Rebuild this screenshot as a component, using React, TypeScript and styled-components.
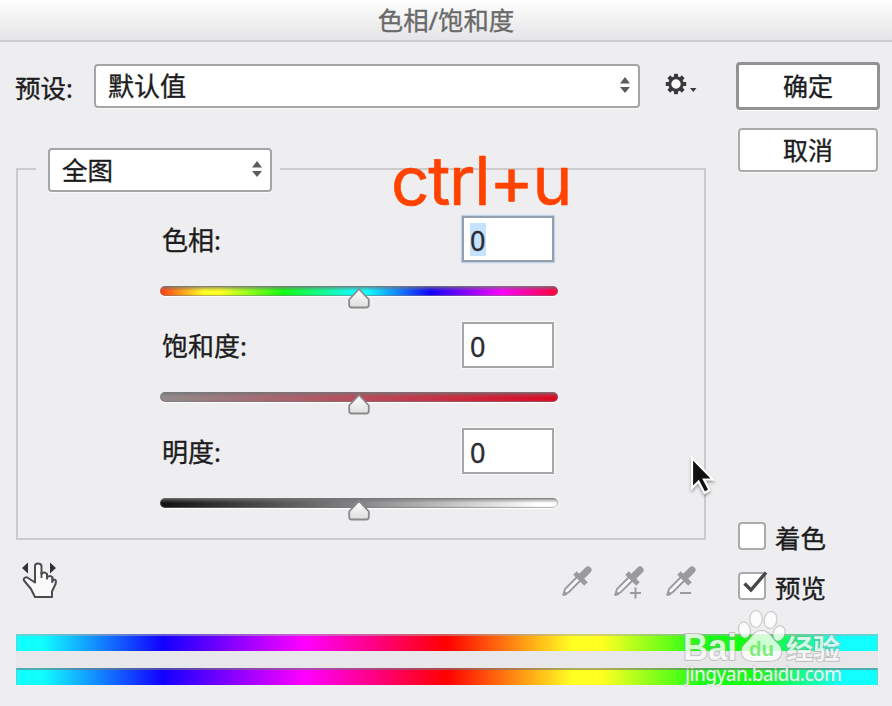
import React from "react";
import styled, { createGlobalStyle } from "styled-components";

const Global = createGlobalStyle`
  * { box-sizing: border-box; }
  body { margin: 0; background: #eeeef0; }
`;

const Dialog = styled.div`
  position: relative;
  width: 892px;
  height: 706px;
  overflow: hidden;
  background: #eeeef0;
  color: #1c1c1e;
  font: 26px/32px "Noto Sans", "Noto Sans CJK SC", sans-serif;
  -webkit-text-stroke: 0.35px currentColor;
  display: flex;
  flex-direction: column;
`;

const TitleBar = styled.header`
  flex: none;
  height: 42px;
  padding-top: 4px;
  border-bottom: 2px solid #cbcbcc;
  background: linear-gradient(#fefefe, #f6f5f6 35%, #e5e4e6);
  color: #6a6a6b;
  text-align: center;
  font-size: 25.4px;
`;

const Content = styled.div`
  flex: none;
  height: 592px;
  display: flex;
  padding: 0 12px 0 16px;
  justify-content: space-between;
`;

const Main = styled.main`
  width: 690px;
  display: flex;
  flex-direction: column;
`;

const PresetRow = styled.div`
  display: flex;
  height: 44px;
  margin: 22px 0 38px;
`;

const PresetLabel = styled.label`
  width: 78px;
  margin-left: -1px;
  margin-right: 1px;
  padding-top: 8px;
  font-size: 25.5px;
`;

const SelectBox = styled.div<{ $width: number }>`
  width: ${(p) => p.$width}px;
  height: 44px;
  display: flex;
  align-items: center;
  justify-content: space-between;
  padding: 0 7px 0 12px;
  border: 2px solid #a5a5a7;
  border-radius: 4px;
  background: #fff;
  box-shadow: 0 1px 1px #fafafa;
`;

const GearButton = styled.div`
  margin: 8px 0 0 25px;
  display: flex;
`;

const Group = styled.fieldset`
  height: 394px;
  min-width: 0;
  margin: 0;
  padding: 0 0 0 142px;
  border: 2px solid #cbcbcd;
`;

const Legend = styled.legend`
  width: 244px;
  height: 46px;
  padding: 2px 8px 0 12px;
  margin-left: -124px;
  font-size: 25.5px;
`;

const SliderRow = styled.div`
  width: 398px;
  height: 106px;
`;

const Sliders = styled.div`
  padding-top: 24px;
`;

const SliderHead = styled.div`
  display: flex;
  height: 46px;
  justify-content: space-between;
  padding: 0 4px 0 2px;
`;

const SliderName = styled.span`
  padding-top: 8px;
`;

const NumberField = styled.div<{ $focused?: boolean }>`
  width: 92px;
  height: 46px;
  padding: 5px 0 0 6px;
  border: 2px solid ${(p) => (p.$focused ? "#94a0ae" : "#a6a6a8")};
  background: #fff;
  box-shadow: 0 0 1px 1px ${(p) => (p.$focused ? "#bfd3e8" : "#f6f6f6")};
  font-size: 27px;
`;

const Digit = styled.span<{ $selected?: boolean }>`
  display: block;
  width: 16px;
  height: 33px;
  line-height: 35px;
  color: #2c2c30;
  background: ${(p) => (p.$selected ? "#c5e3ff" : "transparent")};
`;

const Track = styled.div<{ $fill: string }>`
  height: 10px;
  margin-top: 24px;
  border-radius: 5px;
  background: linear-gradient(#747476d0, #77777900 50%), ${(p) => p.$fill};
  box-shadow: inset 0 0 1px 1px #77777999, 0 1px 1px #fff;
`;

const Thumb = styled.svg`
  display: block;
  margin: 0 auto;
  transform: translateY(2px);
`;

const ToolRow = styled.div`
  display: flex;
  justify-content: space-between;
  padding: 21px 7px 0 4px;
`;

const Droppers = styled.div`
  display: flex;
  gap: 16px;
  padding-top: 3px;
`;

const Side = styled.aside`
  width: 144px;
  padding-top: 20px;
  display: flex;
  flex-direction: column;
`;

const Button = styled.button<{ $primary?: boolean }>`
  width: ${(p) => (p.$primary ? 144 : 140)}px;
  height: ${(p) => (p.$primary ? 48 : 44)}px;
  margin: ${(p) => (p.$primary ? "0 0 18px" : "0 0 350px 2px")};
  padding: 0;
  border: ${(p) => (p.$primary ? "3px solid #929294" : "2px solid #ababad")};
  border-radius: 4px;
  background: #fff;
  box-shadow: 0 1px 1px #fafafa;
  color: inherit;
  font: inherit;
  font-size: 25px;
`;

const CheckRow = styled.label`
  display: flex;
  align-items: center;
  height: 28px;
  margin: 0 0 22px 2px;
  gap: 9px;
  font-size: 25.5px;
  white-space: nowrap;
`;

const CheckText = styled.span`
  padding-top: 3px;
`;

const CheckBox = styled.span`
  width: 28px;
  height: 28px;
  border: 2px solid #ababad;
  border-radius: 4px;
  background: #fff;
  svg { display: block; margin: -2px; overflow: visible; }
`;

const Strips = styled.footer`
  width: 862px;
  margin-left: 16px;
  background: #e8e7e9;
`;

const Spectrum = styled.div`
  height: 17px;
  margin-bottom: 17px;
  border: solid #aaaaac88;
  border-width: 2px 1px 0;
  background: linear-gradient(90deg, #1ff 0, #1ff 3%, #1200ff 17%, #f0f 33.5%, #f00 50%, #ff2 64.5%, #ff2 68%, #1f1 80%, #1f1 86%, #1ff 96%);
  background-origin: border-box;
  &:last-child { margin-bottom: 0; border-top-color: #77777999; }
`;

const Caption = styled.div`
  position: absolute;
  left: 391px;
  top: 141px;
  color: #ff4200;
  font: 67.5px/80px Inter, sans-serif;
  letter-spacing: -1.3px;
  -webkit-text-stroke: 0.6px #ff4200;
  white-space: nowrap;
`;

const Pointer = styled.svg`
  position: absolute;
  left: 685px;
  top: 453px;
  filter: drop-shadow(0 2px 1.5px #0005);
`;

const Watermark = styled.svg`
  position: absolute;
  left: 680px;
  top: 604px;
  -webkit-text-stroke: 0;
`;

const Arrows = () => (
  <svg width="12" height="18" viewBox="0 0 12 18" fill="#5c5c5e">
    <path d="M6 0L11 6.5H1zM1 10H11L6 16z" />
  </svg>
);

const Gear = () => (
  <svg width="36" height="24" viewBox="0 0 36 24">
    <g transform="translate(11 12)" stroke="#3a3a3c">
      <circle r="6.2" fill="#fafafa" strokeWidth="3" />
      {[0, 45, 90, 135, 180, 225, 270, 315].map((a) => (
        <path key={a} d="M0-6V-10.2" strokeWidth="4" transform={`rotate(${a})`} />
      ))}
    </g>
    <path d="M25 16h6.5l-3.2 4z" fill="#3a3a3c" />
  </svg>
);

const Dropper = ({ sign }: { sign?: string }) => (
  <svg width="36" height="36" viewBox="0 0 36 36" fill="none" stroke="#9b9b9d">
    <path d="M18 13L6 25L4.5 30L9.5 28.5L22 16" fill="#f7f7f8" strokeWidth="1.8" />
    <path d="M4 31.5l1-4 3 3z" fill="#9b9b9d" />
    <path d="M16 9l11 11M20 14l4-4" strokeWidth="5" />
    <path d="M23 12l6-6" strokeWidth="7" strokeLinecap="round" />
    {sign && <path d={sign} strokeWidth="2" />}
  </svg>
);

const Hand = () => (
  <svg width="38" height="38" viewBox="0 0 38 38">
    <path d="M2 7l6-5.5v11zM36 7l-6-5.5v11z" fill="#333335" />
    <path
      d="M15 36L11 28L4 19.5C3 17 6 15.5 8 17L15 21.5V5Q15 2.5 18 2.5T21.5 5V13Q24 10 27 13V16.5Q30 13.5 32.5 16.5V20Q35.5 17 36 20.5L35.5 23L32 30.5V36Z"
      fill="#fafafb"
      stroke="#4c4c4e"
      strokeWidth="2"
      strokeLinejoin="round"
    />
    <path d="M21.5 11V17M27 14V18.5M32.3 17V22" fill="none" stroke="#4c4c4e" strokeWidth="1.8" />
  </svg>
);

const sliders = [
  {
    name: "色相:",
    fill: "linear-gradient(90deg, #ff3b15 0, #ff2 11%, #ff2 15%, #1f1 31%, #1ff 49%, #1ff 52%, #10f 68%, #f0f 86%, #f03 100%)",
  },
  { name: "饱和度:", fill: "linear-gradient(90deg, #928b8c, #b84c5b 50%, #dc0824)" },
  { name: "明度:", fill: "linear-gradient(90deg, #101010, #858587 50%, #fff 95%)" },
];

export default function App() {
  return (
    <>
      <Global />
      <Dialog>
        <TitleBar>色相/饱和度</TitleBar>
        <Content>
          <Main>
            <PresetRow>
              <PresetLabel>预设:</PresetLabel>
              <SelectBox $width={546}>
                默认值
                <Arrows />
              </SelectBox>
              <GearButton>
                <Gear />
              </GearButton>
            </PresetRow>
            <Group>
              <Legend>
                <SelectBox $width={224}>
                  全图
                  <Arrows />
                </SelectBox>
              </Legend>
              <Sliders>
                {sliders.map((s, i) => (
                  <SliderRow key={s.name}>
                    <SliderHead>
                      <SliderName>{s.name}</SliderName>
                      <NumberField $focused={i === 0}>
                        <Digit $selected={i === 0}>0</Digit>
                      </NumberField>
                    </SliderHead>
                    <Track $fill={s.fill}>
                      <Thumb width="24" height="24" viewBox="0 0 24 24">
                        <defs>
                          <linearGradient id="thumb" x2="0" y2="1">
                            <stop offset="0" stopColor="#fff" />
                            <stop offset="1" stopColor="#dededf" />
                          </linearGradient>
                        </defs>
                        <path
                          d="M12 1L21.8 11.5V17Q21.8 19.5 19.3 19.5H4.7Q2.2 19.5 2.2 17V11.5Z"
                          fill="url(#thumb)"
                          stroke="#8a8a8c"
                          strokeWidth="1.8"
                          strokeLinejoin="round"
                        />
                      </Thumb>
                    </Track>
                  </SliderRow>
                ))}
              </Sliders>
            </Group>
            <ToolRow>
              <Hand />
              <Droppers>
                <Dropper />
                <Dropper sign="M19 29h11M24.5 23.5v11" />
                <Dropper sign="M17 29h11" />
              </Droppers>
            </ToolRow>
          </Main>
          <Side>
            <Button $primary>确定</Button>
            <Button>取消</Button>
            <CheckRow>
              <CheckBox />
              <CheckText>着色</CheckText>
            </CheckRow>
            <CheckRow>
              <CheckBox>
                <svg width="28" height="28" viewBox="0 0 28 28">
                  <path d="M6.5 11.5L13 18L28 0.5" fill="none" stroke="#48484a" strokeWidth="3.4" />
                </svg>
              </CheckBox>
              <CheckText>预览</CheckText>
            </CheckRow>
          </Side>
        </Content>
        <Strips>
          <Spectrum />
          <Spectrum />
        </Strips>

        <Caption>ctrl+u</Caption>
        <Pointer width="34" height="48" viewBox="0 0 34 48">
          <path
            d="M7 5V35L13.5 28.5L19.5 40L24.5 37L19 26.5H28Z"
            fill="#111"
            stroke="#fff"
            strokeWidth="2.2"
          />
        </Pointer>
        <Watermark width="180" height="90" viewBox="0 0 180 90">
          <g
            fill="#fff"
            fillOpacity=".8"
            stroke="#999"
            strokeOpacity=".5"
            strokeWidth="1.8"
            paintOrder="stroke"
          >
            <text x="3" y="56" fontFamily="Liberation Sans" fontWeight="700" fontSize="36" textLength="54" lengthAdjust="spacingAndGlyphs">
              Bai
            </text>
            <ellipse cx="64.5" cy="26" rx="5.5" ry="7.8" transform="rotate(-12 64.5 26)" />
            <ellipse cx="76" cy="15" rx="5.8" ry="8.2" />
            <ellipse cx="90.5" cy="16" rx="6" ry="8.2" transform="rotate(10 90.5 16)" />
            <ellipse cx="99" cy="29.5" rx="5.5" ry="7.5" transform="rotate(20 99 29.5)" />
            <path d="M81.5 27C88 27 91 32 94 36C98 40 103 43 101 50C99 58 90 57 81.5 57S64 58 62 50C60 43 65 40 69 36C72 32 75 27 81.5 27Z" />
            <text x="106" y="54.5" fontFamily="Noto Sans CJK SC" fontWeight="700" fontSize="27">
              经验
            </text>
            <text x="5" y="77" fontFamily="Noto Sans" fontWeight="500" fontSize="19" textLength="157" strokeWidth="1">
              jingyan.baidu.com
            </text>
          </g>
          <text x="69" y="52" fontFamily="Liberation Sans" fontWeight="700" fontSize="21" fill="#5fe85c" fillOpacity=".8" textLength="25" lengthAdjust="spacingAndGlyphs">
            du
          </text>
        </Watermark>
      </Dialog>
    </>
  );
}
